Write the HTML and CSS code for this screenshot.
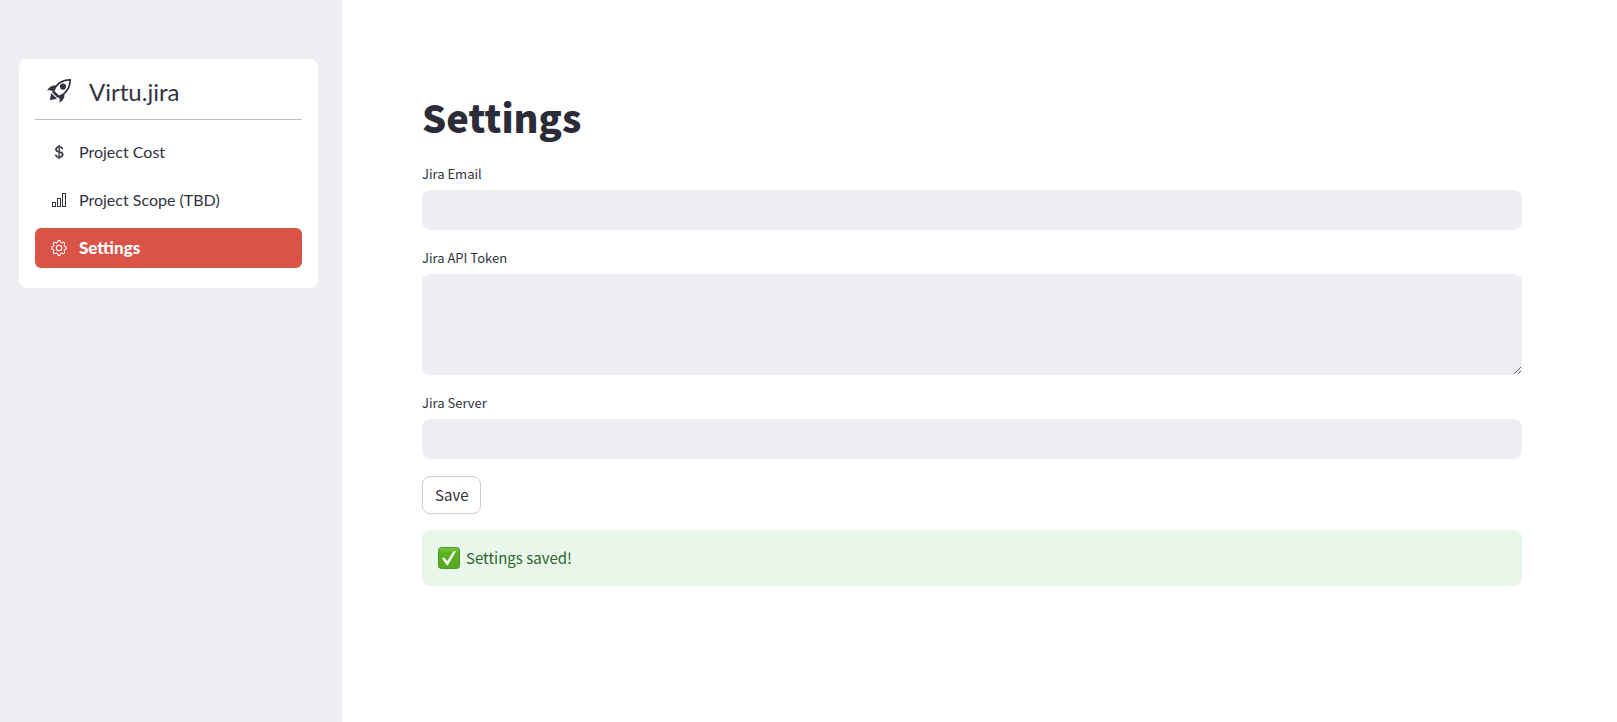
FILE: index.html
```html
<!DOCTYPE html>
<html lang="en">
<head>
<meta charset="utf-8">
<title>Virtu.jira – Settings</title>
<link rel="stylesheet" href="styles.css">
</head>
<body>
<div class="app">
  <aside class="sidebar">
    <nav class="menu" aria-label="Main">
      <div class="brand">
        <svg class="brand-icon" viewBox="0 0 24 24" aria-hidden="true">
          <path fill-rule="evenodd" fill="currentColor" d="M24 0C17.600-.200 12.300 2 8.400 6.600C5 6.300 2 8.200 0 11.600C2 11 3.800 11.100 5.300 11.800L5.600 13.700L10.300 18.400L12.200 18.700C12.900 20.300 12.900 22 12.200 24C16 21.600 17.800 18.500 17.400 15.600C22 11.700 24.200 6.400 24 0ZM22.200 1.800C22.100 7 20 11.200 16 14.400L12 16.600L7.400 12L9.600 8C12.800 4 17 1.900 22.200 1.800Z"/>
          <circle cx="16" cy="7.600" r="3.100" fill="currentColor"/>
          <path fill="currentColor" d="M4.200 14L2.800 21.200L10 19.800Z"/>
        </svg>
        <span>Virtu.jira</span>
      </div>
      <ul class="menu-list">
        <li><a class="menu-link" href="#cost">
          <svg class="menu-icon" viewBox="0 0 16 16" fill="currentColor" stroke="currentColor" stroke-width=".3" aria-hidden="true"><path d="M4 10.781c.148 1.667 1.513 2.85 3.591 3.003V15h1.043v-1.216c2.27-.179 3.678-1.438 3.678-3.3 0-1.59-.947-2.51-2.956-3.028l-.722-.187V3.467c1.122.11 1.879.714 2.07 1.616h1.47c-.166-1.6-1.54-2.748-3.54-2.875V1H7.591v1.233c-1.939.23-3.27 1.472-3.27 3.156 0 1.454.966 2.483 2.661 2.917l.61.162v4.031c-1.149-.17-1.94-.8-2.131-1.718H4zm3.391-3.836c-1.043-.263-1.6-.825-1.6-1.616 0-.944.704-1.641 1.8-1.828v3.495l-.2-.05zm1.591 1.872c1.287.323 1.852.859 1.852 1.769 0 1.097-.826 1.828-2.2 1.939V8.73l.348.086z"/></svg>
          <span class="menu-text">Project Cost</span></a></li>
        <li><a class="menu-link" href="#scope">
          <svg class="menu-icon" viewBox="0 0 16 16" fill="none" stroke="currentColor" aria-hidden="true"><rect x="1.500" y="10.500" width="3" height="4"/><rect x="6.500" y="6.500" width="3" height="8"/><rect x="11.500" y="1.500" width="3" height="13"/></svg>
          <span class="menu-text">Project Scope (TBD)</span></a></li>
        <li><a class="menu-link menu-link-active" href="#settings" aria-current="page">
          <svg class="menu-icon" viewBox="0 0 16 16" fill="currentColor" aria-hidden="true"><path d="M8 4.754a3.246 3.246 0 1 0 0 6.492 3.246 3.246 0 0 0 0-6.492zM5.754 8a2.246 2.246 0 1 1 4.492 0 2.246 2.246 0 0 1-4.492 0z"/><path d="M9.796 1.343c-.527-1.79-3.065-1.79-3.592 0l-.094.319a.873.873 0 0 1-1.255.52l-.292-.16c-1.64-.892-3.433.902-2.54 2.541l.159.292a.873.873 0 0 1-.52 1.255l-.319.094c-1.79.527-1.79 3.065 0 3.592l.319.094a.873.873 0 0 1 .52 1.255l-.16.292c-.892 1.64.901 3.434 2.541 2.54l.292-.159a.873.873 0 0 1 1.255.52l.094.319c.527 1.79 3.065 1.79 3.592 0l.094-.319a.873.873 0 0 1 1.255-.52l.292.16c1.64.893 3.434-.902 2.54-2.541l-.159-.292a.873.873 0 0 1 .52-1.255l.319-.094c1.79-.527 1.79-3.065 0-3.592l-.319-.094a.873.873 0 0 1-.52-1.255l.16-.292c.893-1.64-.902-3.433-2.541-2.54l-.292.159a.873.873 0 0 1-1.255-.52l-.094-.319zm-2.633.283c.246-.835 1.428-.835 1.674 0l.094.319a1.873 1.873 0 0 0 2.693 1.115l.291-.16c.764-.415 1.6.42 1.184 1.185l-.159.292a1.873 1.873 0 0 0 1.116 2.692l.318.094c.835.246.835 1.428 0 1.674l-.319.094a1.873 1.873 0 0 0-1.115 2.693l.16.291c.415.764-.42 1.6-1.185 1.184l-.291-.159a1.873 1.873 0 0 0-2.693 1.116l-.094.318c-.246.835-1.428.835-1.674 0l-.094-.319a1.873 1.873 0 0 0-2.692-1.115l-.292.16c-.764.415-1.6-.42-1.184-1.185l.159-.291A1.873 1.873 0 0 0 1.945 8.93l-.319-.094c-.835-.246-.835-1.428 0-1.674l.319-.094A1.873 1.873 0 0 0 3.06 4.377l-.16-.292c-.415-.764.42-1.6 1.185-1.184l.292.159a1.873 1.873 0 0 0 2.692-1.115l.094-.319z"/></svg>
          <span class="menu-text">Settings</span></a></li>
      </ul>
    </nav>
  </aside>
  <main class="content">
    <h1 class="title">Settings</h1>
    <form class="form">
      <div class="field">
        <label class="label" for="email">Jira Email</label>
        <input class="control" id="email" type="text">
      </div>
      <div class="field">
        <label class="label" for="token">Jira API Token</label>
        <textarea class="control control-area" id="token"></textarea>
      </div>
      <div class="field">
        <label class="label" for="server">Jira Server</label>
        <input class="control" id="server" type="text">
      </div>
      <button class="save" type="button">Save</button>
    </form>
    <div class="alert" role="status">
      <svg class="alert-icon" viewBox="0 0 22 22" aria-hidden="true">
        <defs><linearGradient id="green" x1="0" y1="0" x2="0" y2="1"><stop offset="0" stop-color="#7cc843"/><stop offset=".25" stop-color="#5cb321"/><stop offset="1" stop-color="#55a61c"/></linearGradient></defs>
        <rect x=".500" y=".500" width="21" height="21" rx="3" fill="url(#green)" stroke="#4a9426"/>
        <path d="M4 11.500L6 10.300L9.200 14.200L15.500 4.300L18 4.300L9.800 18.200L8.800 18.200Z" fill="#fff"/>
      </svg>
      <span>Settings saved!</span>
    </div>
  </main>
</div>
</body>
</html>
```
FILE: styles.css
```css
* { box-sizing: border-box; }

body {
  margin: 0;
  color: #31333f;
  background: #fff;
  font-family: "Noto Sans CJK SC", "Noto Sans", sans-serif;
}

.app { display: flex; min-height: 100vh; }

.sidebar {
  flex: 0 0 342px;
  padding: 59px 24px 24px 19px;
  background: #eeeff3;
}

.menu {
  padding: 16px 16px 20px;
  border-radius: 8px;
  background: #fff;
  font-family: Lato, sans-serif;
}

.brand {
  display: flex;
  align-items: center;
  gap: 18px;
  height: 45px;
  padding: 0 12px 12px;
  border-bottom: 1px solid #bfbfbf;
  font-size: 24px;
}

.brand-icon { width: 24px; height: 24px; }

.menu-list {
  display: flex;
  flex-direction: column;
  gap: 8px;
  margin: 12px 0 0;
  padding: 0;
  list-style: none;
}

.menu-link {
  display: flex;
  align-items: center;
  gap: 12px;
  height: 40px;
  padding: 0 16px;
  border-radius: 6px;
  color: inherit;
  font-size: 16px;
  text-decoration: none;
}

.menu-text { padding-bottom: 2px; }

.menu-link-active {
  color: #fff;
  background: #d95346;
  font-size: 17px;
  font-weight: 900;
}

.menu-icon { width: 16px; height: 16px; }

.content { flex: 1; padding: 89px 95px 80px 80px; }

.title {
  margin: 0;
  color: #2b2c38;
  font-size: 38px;
  font-weight: 900;
  line-height: 56px;
}

.form {
  display: flex;
  flex-direction: column;
  align-items: flex-start;
  gap: 16px;
  margin-top: 17px;
}

.field { display: flex; flex-direction: column; width: 100%; }

.label { height: 28px; font-size: 13px; line-height: 24px; }

.control {
  width: 100%;
  height: 40px;
  padding: 8px 12px;
  border: 0;
  border-radius: 8px;
  background: #eeeff3;
  color: inherit;
  font: inherit;
}

.control-area { height: 101px; resize: vertical; }

.save {
  height: 38px;
  margin-top: 1px;
  padding: 0 12px;
  border: 1px solid #cdced2;
  border-radius: 8px;
  background: #fff;
  color: inherit;
  font-family: inherit;
  font-size: 15px;
  line-height: 24px;
}

.alert {
  display: flex;
  align-items: center;
  gap: 6px;
  margin-top: 16px;
  padding: 16px;
  border-radius: 8px;
  background: #e8f7ea;
  color: #2f642c;
  font-size: 15px;
  line-height: 24px;
}

.alert-icon { width: 22px; height: 22px; }
```
